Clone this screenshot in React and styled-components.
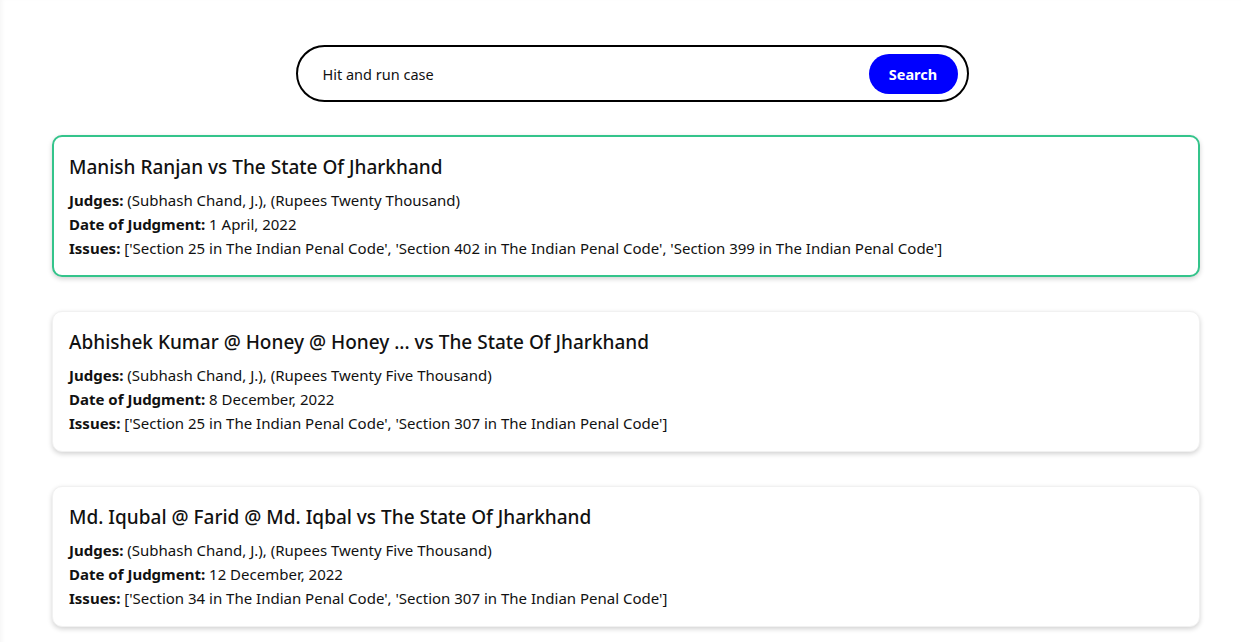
import React, { useState } from "react";
import styled, { createGlobalStyle } from "styled-components";

const GlobalStyle = createGlobalStyle`
  body {
    margin: 0;
    background: #ffffff;
    font-family: "Noto Sans", "Open Sans", sans-serif;
    color: #111111;
  }
`;

const Page = styled.div`
  min-height: 642px;
  padding: 45px 41px 20px 52px;
  box-sizing: border-box;
  box-shadow: inset 4px 0 4px -2px rgba(0, 0, 0, 0.04);
`;

const SearchBar = styled.form`
  width: 673px;
  height: 57px;
  box-sizing: border-box;
  margin: 0 auto 33px;
  position: relative;
  left: 6px;
  border: 2px solid #000;
  border-radius: 29px;
  display: flex;
  align-items: center;
  padding: 0 9px 0 23px;
`;

const SearchInput = styled.input`
  flex: 1;
  border: none;
  outline: none;
  font-family: inherit;
  font-size: 14.5px;
  color: #111;
  background: transparent;
`;

const SearchButton = styled.button`
  width: 89px;
  height: 40px;
  border: none;
  border-radius: 20px;
  background: #0000ff;
  color: #fff;
  font-family: inherit;
  font-weight: 700;
  font-size: 14.5px;
  cursor: pointer;
`;

const List = styled.div`
  display: flex;
  flex-direction: column;
  gap: 34px;
`;

const Card = styled.div`
  border: ${(p) => (p.$active ? "2px solid #34c48b" : "1px solid #f1f1f1")};
  padding: ${(p) => (p.$active ? "16px 15px 15px" : "16px")};
  border-radius: 10px;
  background: #fff;
  box-shadow: 0 2px 5px rgba(0, 0, 0, 0.18);
  cursor: pointer;
`;

const Title = styled.h3`
  margin: 0 0 7px;
  font-size: 19px;
  font-weight: 500;
  line-height: 28px;
  color: #111;
`;

const Line = styled.p`
  margin: 0;
  font-size: 15px;
  line-height: 24px;
  color: #111;
  b {
    font-weight: 700;
  }
`;

const cases = [
  {
    title: "Manish Ranjan vs The State Of Jharkhand",
    judges: "(Subhash Chand, J.), (Rupees Twenty Thousand)",
    date: "1 April, 2022",
    issues:
      "['Section 25 in The Indian Penal Code', 'Section 402 in The Indian Penal Code', 'Section 399 in The Indian Penal Code']",
  },
  {
    title: "Abhishek Kumar @ Honey @ Honey ... vs The State Of Jharkhand",
    judges: "(Subhash Chand, J.), (Rupees Twenty Five Thousand)",
    date: "8 December, 2022",
    issues:
      "['Section 25 in The Indian Penal Code', 'Section 307 in The Indian Penal Code']",
  },
  {
    title: "Md. Iqubal @ Farid @ Md. Iqbal vs The State Of Jharkhand",
    judges: "(Subhash Chand, J.), (Rupees Twenty Five Thousand)",
    date: "12 December, 2022",
    issues:
      "['Section 34 in The Indian Penal Code', 'Section 307 in The Indian Penal Code']",
  },
];

export default function App() {
  const [query, setQuery] = useState("Hit and run case");
  const [active, setActive] = useState(0);

  return (
    <Page>
      <GlobalStyle />
      <SearchBar onSubmit={(e) => e.preventDefault()}>
        <SearchInput value={query} onChange={(e) => setQuery(e.target.value)} />
        <SearchButton type="submit">Search</SearchButton>
      </SearchBar>
      <List>
        {cases.map((c, i) => (
          <Card key={i} $active={i === active} onClick={() => setActive(i)}>
            <Title>{c.title}</Title>
            <Line>
              <b>Judges:</b> {c.judges}
            </Line>
            <Line>
              <b>Date of Judgment:</b> {c.date}
            </Line>
            <Line>
              <b>Issues:</b> {c.issues}
            </Line>
          </Card>
        ))}
      </List>
    </Page>
  );
}
